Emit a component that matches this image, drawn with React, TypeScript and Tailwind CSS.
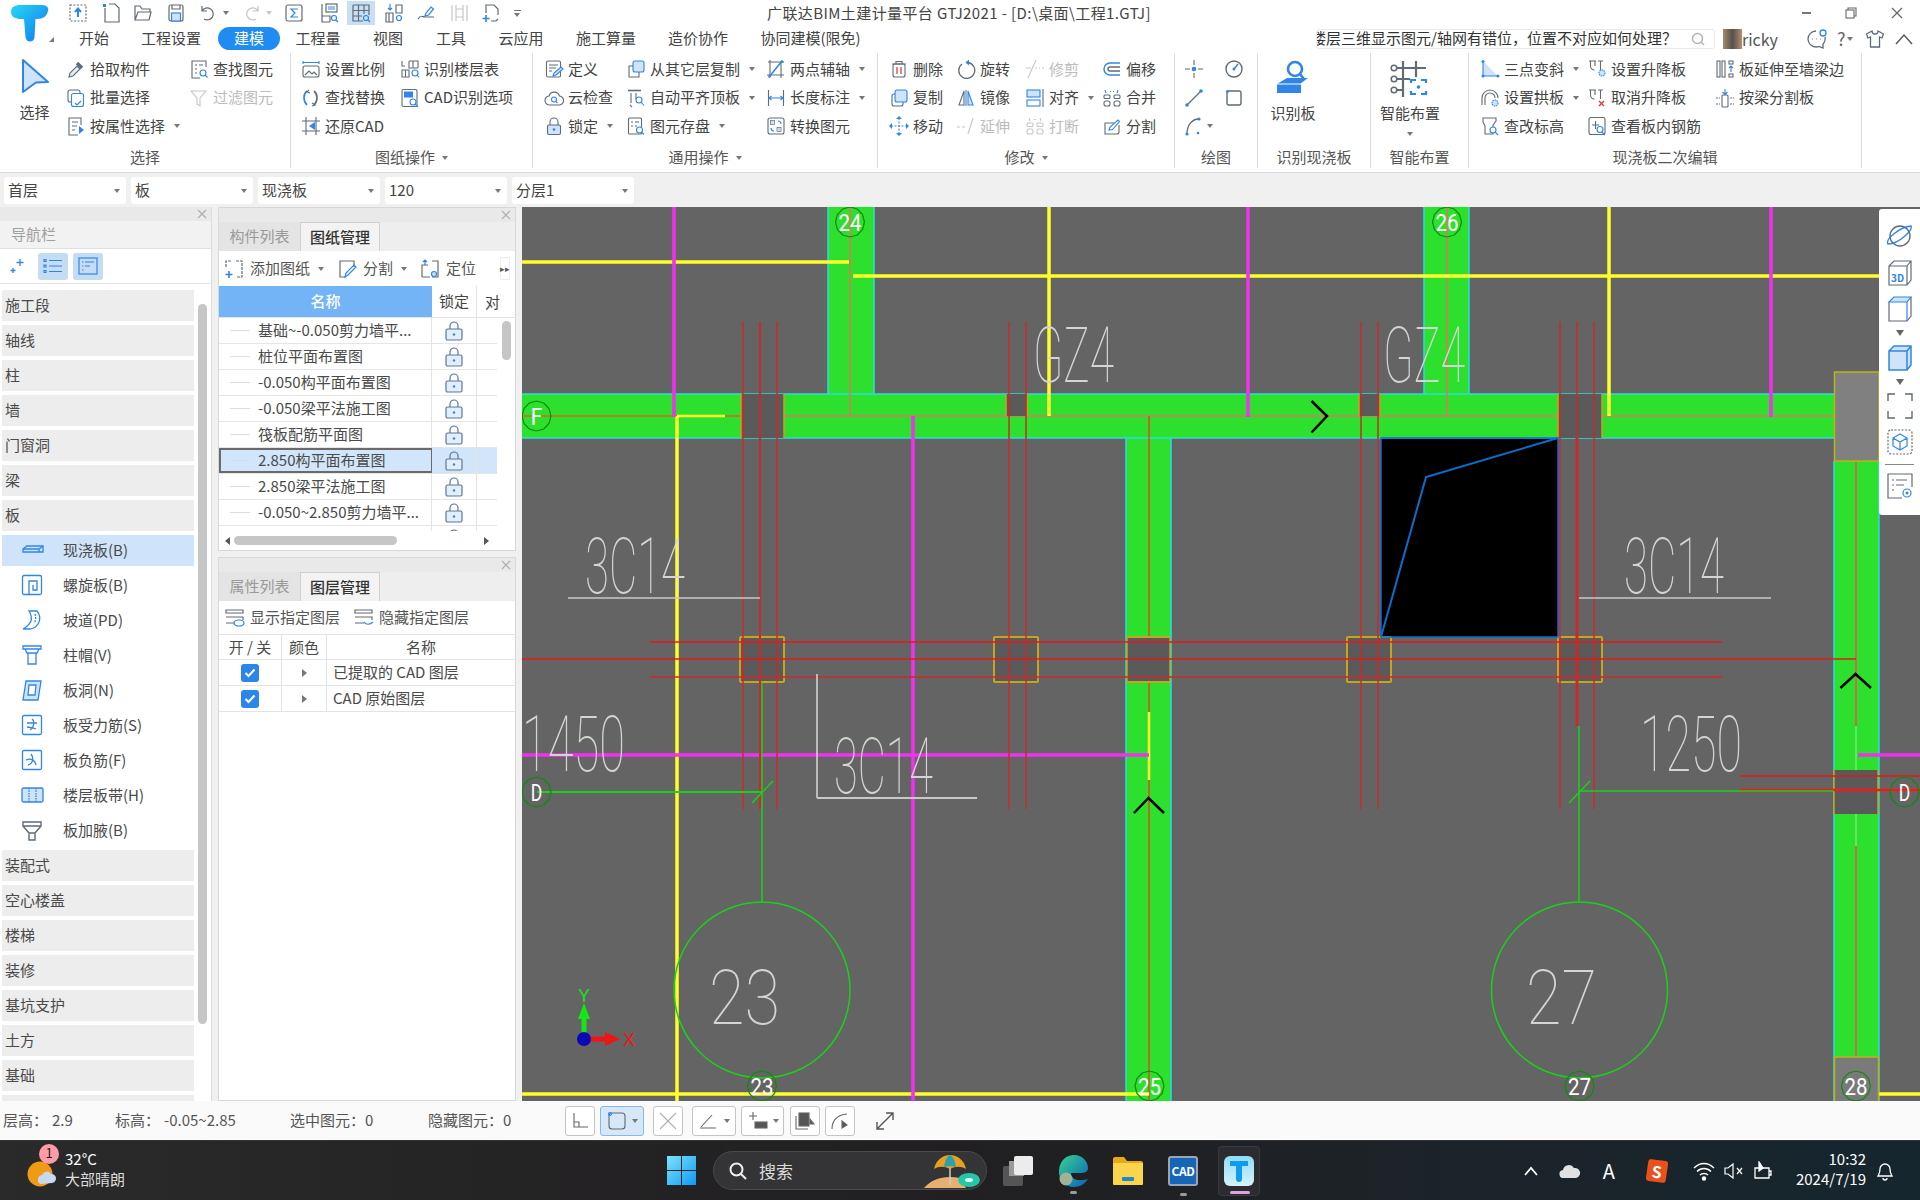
import React from 'react';

const G = '#5f6b76';
const B = '#2f86e8';
const F = '#cfe3fb';
const D = '#c6c6c6';

// ribbon and toolbar glyphs, all on a 20x20 box
const glyphs: Record<string, React.ReactNode> = {
  pick: <><path d="M3 18l1-4 7-7 3 3-7 7z" stroke={G} fill="#e8edf2" /><path d="M11 4l5 5" stroke={G} strokeWidth="3.4" /></>,
  batch: <><rect x="2" y="2" width="12" height="12" rx="2" stroke={G} /><rect x="5.5" y="5.5" width="12" height="13" rx="2" stroke={B} fill="#fff" /><path d="M9 15l2 2 4-4" stroke={B} /></>,
  attr: <><path d="M15 9V2H3v17h9" stroke={G} /><path d="M6 6h6M6 10h5M6 14h3" stroke={G} /><path d="M13 10l5 4-5 4z" fill={B} /></>,
  find: <><path d="M17 8V2H3v17h8" stroke={G} /><path d="M6 6h2M10 6h4M6 10h2M6 14h2" stroke={G} /><circle cx="14" cy="14" r="3" stroke={B} /><path d="M16 16l2.500 2.500" stroke={B} /></>,
  filter: <path d="M2 3h15l-6 7v8l-3-2v-6z" stroke={D} />,
  scale: <><path d="M2 2v3M18 2v3M2 3.500h16" stroke={B} /><rect x="2" y="7" width="16" height="11" rx="2" stroke={G} /><path d="M4 16l4-4 3 3 2-2 3 3" stroke={G} /></>,
  replace: <><path d="M6 3C2 6 2 13 6 17" stroke={B} strokeWidth="1.600" /><path d="M13 3c4 3 4 10 0 14" stroke={G} strokeWidth="1.600" /><path d="M8 2l-2 2 3 1M11 18l3-1-3-2" stroke={G} /></>,
  restore: <><path d="M5 1v18M15 1v18M1 5h18M1 15h18" stroke={G} /><path d="M14 6l-6 4 6 4z" fill={B} /></>,
  floor: <><path d="M2 2v5h3M9 2h9v7M13 2v7M9 2v7h9M2 11v7h7v-7zM5.500 11v7" stroke={G} /><circle cx="15" cy="14" r="3" stroke={B} /><path d="M17 16l2 2.500" stroke={B} /></>,
  cadopt: <><rect x="2" y="1.500" width="15" height="17" rx="1.500" stroke={G} /><rect x="4" y="3.500" width="9" height="6" fill={B} /><circle cx="13" cy="14" r="3" stroke={B} fill="#fff" /><path d="M15 16l3 3" stroke={B} /></>,
  define: <><rect x="2.500" y="2" width="14" height="16" rx="1.500" stroke={G} /><path d="M5 6h9M5 9h7M5 12h3" stroke={G} /><path d="M9 17l1-3 7-6 2 2-7 6z" fill={F} stroke={B} /></>,
  cloud: <><path d="M6 17a4.500 4.500 0 0 1-1-9 5.500 5.500 0 0 1 10.500 0 4.500 4.500 0 0 1-1 9z" stroke={G} /><circle cx="10" cy="11.500" r="2.500" stroke={B} /><path d="M12 13.500l1.500 1.500" stroke={B} /></>,
  lock: <><path d="M6 9V6a4 4 0 0 1 8 0v3" stroke={G} /><rect x="3.500" y="9" width="13" height="9.500" rx="1.500" stroke={G} fill={F} /><circle cx="10" cy="13.500" r="1.300" fill={B} /></>,
  floorcopy: <><rect x="7" y="2" width="11" height="11" rx="2" stroke={B} fill={F} /><path d="M7 7H3v11h10v-5" stroke={G} /></>,
  autotop: <><path d="M2 2.500h13" stroke={G} strokeWidth="1.600" /><path d="M5 5v10M10 5v6" stroke={G} /><circle cx="13" cy="12" r="3" stroke={B} /><path d="M15 14l3 3.500M4 17l2 2" stroke={B} /></>,
  save: <><rect x="2.500" y="2" width="13" height="16" rx="1" stroke={G} /><path d="M5 6h2M9 6h4M5 10h2M9 10h2" stroke={G} /><circle cx="13.500" cy="14" r="3" stroke={B} fill="#fff" /><path d="M15.500 16l2.500 2.500" stroke={B} /></>,
  axis: <><path d="M4 1v17M1 16h17M15 3v16M2 3h16" stroke={G} /><path d="M3 18L16 2" stroke={B} strokeWidth="1.500" /><circle cx="3.500" cy="17.500" r="1.300" fill={B} /><circle cx="16" cy="2.500" r="1.300" fill={B} /></>,
  dim: <><path d="M2.500 2v16M17.500 2v16" stroke={G} /><path d="M3 10h14M5.500 8l-2.500 2 2.500 2M14.500 8l2.500 2-2.500 2" stroke={B} /></>,
  convert: <><rect x="2" y="2" width="16" height="16" rx="2" stroke={G} /><rect x="4.500" y="4.500" width="4" height="4" fill={F} stroke={G} strokeWidth=".7" /><rect x="11" y="11.500" width="4" height="4" fill={F} stroke={G} strokeWidth=".7" /><path d="M12 5a3 3 0 0 1 3 3M8 15a3 3 0 0 1-3-3" stroke={B} /></>,
  del: <><path d="M3 5h14M7 5V2.500h6V5" stroke={G} /><rect x="4" y="5" width="12" height="13" rx="2" stroke={G} /><path d="M8 8v7M12 8v7" stroke="#e03c3c" strokeWidth="1.300" /></>,
  rotate: <><path d="M6 5a8 8 0 1 0 6-1.500" stroke={G} strokeWidth="1.300" /><path d="M13 0.500v6l-3.500-3z" fill={B} /></>,
  trim: <><path d="M3 19L11 1" stroke={D} /><path d="M1 9h5M10 9h2M14 9h1M17 9h2" stroke={D} /></>,
  offset: <><path d="M18 4H8a6 6 0 0 0 0 12h10" stroke={B} strokeWidth="1.400" /><path d="M18 8H8a2 2 0 0 0 0 4h10" stroke={G} strokeWidth="1.400" /></>,
  copy: <><rect x="3" y="6" width="11" height="12" rx="2" stroke={G} /><rect x="6" y="2" width="12" height="12" rx="2" stroke={B} fill={F} /></>,
  mirror: <><path d="M8 3L3 17h5z" stroke={G} /><path d="M10 2v16M12 3l5 14h-5z" fill={F} stroke={B} /></>,
  alignn: <><rect x="2" y="2" width="13" height="7" stroke={B} fill={F} /><rect x="2" y="12" width="13" height="6" stroke={B} /><path d="M18 1v18" stroke={G} /></>,
  merge: <><path d="M3 2l1 3M16 2l-1 3M9 3.500h-1M12 3.500h-1" stroke={B} /><rect x="2" y="7" width="6" height="3.500" rx="1" stroke={G} /><rect x="12" y="7" width="6" height="3.500" rx="1" stroke={G} /><rect x="2" y="13" width="6" height="5" rx="2" stroke={G} /><rect x="12" y="13" width="6" height="5" rx="2" stroke={G} /></>,
  move: <><path d="M10 2v16M2 10h16" stroke={B} strokeDasharray="2 1.500" /><path d="M10 0l3 3H7zM10 20l-3-3h6zM0 10l3-3v6zM20 10l-3 3V7z" fill={B} /></>,
  extend: <><path d="M1 11h3M6 11h3" stroke={D} /><path d="M12 18L17 2" stroke={D} /></>,
  breakk: <><path d="M4 2l1 3M15 2l1 3M9 3.500h2" stroke={D} /><rect x="2" y="7" width="6" height="3.500" rx="1" stroke={D} /><rect x="12" y="7" width="6" height="3.500" rx="1" stroke={D} /><rect x="2" y="13" width="6" height="5" rx="2" stroke={D} /><rect x="12" y="13" width="6" height="5" rx="2" stroke={D} /></>,
  split: <><path d="M17 9v7a2 2 0 0 1-2 2H3V7h9" stroke={G} /><path d="M7 14l1-3 8-7 1.500 1.500-7 8z" stroke={B} /></>,
  point: <><path d="M10 1v5M10 14v5M1 10h5M14 10h5" stroke={G} /><circle cx="10" cy="10" r="2.300" fill={B} /></>,
  arcc: <><circle cx="10" cy="10" r="8" stroke={G} strokeWidth="1.400" /><path d="M10 10l4-5" stroke={B} strokeWidth="1.400" /><circle cx="10" cy="10" r="1.500" fill={B} /></>,
  linee: <><path d="M3 17L17 3" stroke={G} strokeWidth="1.300" /><circle cx="3" cy="17" r="1.800" fill={B} /><circle cx="17" cy="3" r="1.800" fill={B} /></>,
  rectt: <><rect x="3" y="3" width="14" height="14" rx="2" stroke={G} strokeWidth="1.400" /><circle cx="3.500" cy="3.500" r="1.400" fill={B} /></>,
  curve: <><path d="M3 18C3 9 8 3 15 3" stroke={G} strokeWidth="1.300" /><circle cx="3" cy="18" r="1.600" fill={B} /><circle cx="15" cy="3" r="1.600" fill={B} /><circle cx="14" cy="17" r="1.300" fill={B} /></>,
  tilt: <><path d="M3 2v15h15z" fill={F} /><path d="M3 2v15h15" stroke={B} /><circle cx="3" cy="2.500" r="1.500" fill={B} /><circle cx="3" cy="17" r="1.500" fill={B} /><circle cx="18" cy="17" r="1.500" fill={B} /></>,
  raise: <><path d="M2 2h7M3.500 2v5a4 4 0 0 0 4 4M8 2v5M11 2h5M13.500 2v9" stroke={G} /><circle cx="15" cy="14" r="3" fill={F} stroke={B} strokeDasharray="1.500 .7" /></>,
  extendb: <><rect x="2" y="2" width="3" height="16" stroke={G} /><rect x="7" y="2" width="3" height="16" stroke={G} /><rect x="14" y="2" width="4" height="3" stroke={G} /><rect x="14" y="15" width="4" height="3" stroke={G} /><path d="M16 13V7M14 9l2-2 2 2" stroke={B} /></>,
  arch: <><path d="M2 17V10a8 8 0 0 1 16 0" stroke={G} /><path d="M5 17v-7a5 5 0 0 1 10 0" stroke={G} /><circle cx="15" cy="15" r="3" fill={F} stroke={B} strokeDasharray="1.500 .7" /></>,
  unraise: <><path d="M2 2h7M3.500 2v5a4 4 0 0 0 4 4M8 2v5M11 2h5M13.500 2v9" stroke={G} /><path d="M12 13l5 5M17 13l-5 5" stroke="#e03c3c" strokeWidth="1.400" /></>,
  beamsplit: <><path d="M10 1v5M7.500 4l2.500 2.500L12.500 4" stroke={B} /><rect x="7" y="7" width="6" height="12" rx="1" stroke={G} /><path d="M1 10h4M15 10h4M1 16h4M15 16h4" stroke={G} strokeDasharray="2 1" /></>,
  elev: <><path d="M3 2h13v3l-3 4v9H5V10L3 6z" stroke={G} /><circle cx="13" cy="14" r="3" fill="#fff" stroke={B} /><path d="M15 16l3 3" stroke={B} /></>,
  slabbar: <><rect x="2" y="1.500" width="16" height="17" rx="2" stroke={G} /><path d="M5 9h7M8.500 5v8" stroke={G} /><circle cx="13" cy="13.500" r="3" fill="#fff" stroke={B} /><path d="M15 16l3 3" stroke={B} /></>,
};

function Glyph({ name, size = 20 }: { name: string; size?: number }) {
  return (
    <svg width={size} height={size} viewBox="0 0 20 20" fill="none" strokeWidth="1.100" className="shrink-0">
      {glyphs[name]}
    </svg>
  );
}

function Caret({ className = '' }: { className?: string }) {
  return <span className={`inline-block h-0 w-0 shrink-0 border-x-[3.5px] border-t-[4px] border-x-transparent border-t-[#777] ${className}`} />;
}

function Item({ icon, text, caret, off }: { icon: string; text: string; caret?: boolean; off?: boolean }) {
  return (
    <div className={`flex h-[28.5px] items-center gap-[4px] whitespace-nowrap ${off ? 'text-[#bcbcbc]' : 'text-[#444]'}`}>
      <Glyph name={icon} />
      <span>{text}</span>
      {caret && <Caret className="ml-[5px]" />}
    </div>
  );
}

function Col({ w, items }: { w: string; items: React.ComponentProps<typeof Item>[] }) {
  return (
    <div className={`flex shrink-0 flex-col ${w}`}>
      {items.map((it) => (
        <Item key={it.text} {...it} />
      ))}
    </div>
  );
}

function Group({ w, label, caret, pl, children }: { w: string; label: string; caret?: boolean; pl: string; children: React.ReactNode }) {
  return (
    <div className={`relative flex h-[115px] shrink-0 flex-col border-r border-[#dedede] ${w}`}>
      <div className={`flex h-[94px] pt-[2px] ${pl}`}>{children}</div>
      <div className="flex h-[21px] items-center justify-center gap-[7px] whitespace-nowrap text-[#555]">
        <span>{label}</span>
        {caret && <Caret />}
      </div>
    </div>
  );
}

function Ribbon() {
  return (
    <div className="flex h-[122px] border-b border-[#dadada] bg-white pt-[2px]">
      <Group w="w-[291px]" label="选择" pl="pl-0">
        <div className="flex w-[66px] shrink-0 flex-col items-center pl-[3px] pt-[3px] text-[#444]">
          <svg width="30" height="38" viewBox="0 0 30 38" fill="none">
            <path d="M3 2l25 22-12 .5L3 34z" fill={F} stroke={B} strokeWidth="2" strokeLinejoin="round" />
          </svg>
          <span className="mt-[7px]">选择</span>
        </div>
        <Col w="w-[123px]" items={[{ icon: 'pick', text: '拾取构件' }, { icon: 'batch', text: '批量选择' }, { icon: 'attr', text: '按属性选择', caret: true }]} />
        <Col w="w-[90px]" items={[{ icon: 'find', text: '查找图元' }, { icon: 'filter', text: '过滤图元', off: true }]} />
      </Group>
      <Group w="w-[242px]" label="图纸操作" caret pl="pl-[10px]">
        <Col w="w-[99px]" items={[{ icon: 'scale', text: '设置比例' }, { icon: 'replace', text: '查找替换' }, { icon: 'restore', text: '还原CAD' }]} />
        <Col w="w-[120px]" items={[{ icon: 'floor', text: '识别楼层表' }, { icon: 'cadopt', text: 'CAD识别选项' }]} />
      </Group>
      <Group w="w-[345px]" label="通用操作" caret pl="pl-[11px]">
        <Col w="w-[82px]" items={[{ icon: 'define', text: '定义' }, { icon: 'cloud', text: '云检查' }, { icon: 'lock', text: '锁定', caret: true }]} />
        <Col w="w-[140px]" items={[{ icon: 'floorcopy', text: '从其它层复制', caret: true }, { icon: 'autotop', text: '自动平齐顶板', caret: true }, { icon: 'save', text: '图元存盘', caret: true }]} />
        <Col w="w-[100px]" items={[{ icon: 'axis', text: '两点辅轴', caret: true }, { icon: 'dim', text: '长度标注', caret: true }, { icon: 'convert', text: '转换图元' }]} />
      </Group>
      <Group w="w-[297px]" label="修改" caret pl="pl-[11px]">
        <Col w="w-[67px]" items={[{ icon: 'del', text: '删除' }, { icon: 'copy', text: '复制' }, { icon: 'move', text: '移动' }]} />
        <Col w="w-[69px]" items={[{ icon: 'rotate', text: '旋转' }, { icon: 'mirror', text: '镜像' }, { icon: 'extend', text: '延伸', off: true }]} />
        <Col w="w-[77px]" items={[{ icon: 'trim', text: '修剪', off: true }, { icon: 'alignn', text: '对齐', caret: true }, { icon: 'breakk', text: '打断', off: true }]} />
        <Col w="w-[60px]" items={[{ icon: 'offset', text: '偏移' }, { icon: 'merge', text: '合并' }, { icon: 'split', text: '分割' }]} />
      </Group>
      <Group w="w-[83px]" label="绘图" pl="pl-[9px]">
        <div className="grid grid-cols-[40px_24px] grid-rows-[28.5px_28.5px_28.5px] items-center">
          <Glyph name="point" />
          <Glyph name="arcc" />
          <Glyph name="linee" />
          <Glyph name="rectt" />
          <div className="flex items-center gap-[3px]">
            <Glyph name="curve" />
            <Caret />
          </div>
        </div>
      </Group>
      <Group w="w-[113px]" label="识别现浇板" pl="pl-0">
        <div className="flex w-[70px] flex-col items-center pt-[4px] text-[#444]">
          <svg width="36" height="36" viewBox="0 0 36 36" fill="none">
            <circle cx="20" cy="10" r="7" stroke={B} strokeWidth="2.600" />
            <path d="M25 15l4 5" stroke={B} strokeWidth="2.600" />
            <path d="M2 25l10-6h22l-8 6v9H2z" fill={B} />
            <path d="M2 25h24l8-6" stroke="#fff" strokeWidth="1.200" />
          </svg>
          <span className="mt-[9px]">识别板</span>
        </div>
      </Group>
      <Group w="w-[98px]" label="智能布置" pl="pl-0">
        <div className="flex w-[78px] flex-col items-center pt-[4px] text-[#444]">
          <svg width="40" height="40" viewBox="0 0 40 40" fill="none">
            <path d="M13 2v36M26 2v16M4 9h32M4 20h16M4 31h10" stroke={G} strokeWidth="2.200" />
            <circle cx="4" cy="9" r="2.800" stroke={G} strokeWidth="1.500" fill="#fff" />
            <circle cx="4" cy="20" r="2.800" stroke={G} strokeWidth="1.500" fill="#fff" />
            <circle cx="4" cy="31" r="2.800" stroke={G} strokeWidth="1.500" fill="#fff" />
            <path d="M21 24v-3h5M31 21h5v3M36 32v3h-5M26 35h-5v-3" stroke={B} strokeWidth="2.200" />
            <circle cx="28.500" cy="28" r="1.800" fill={B} />
          </svg>
          <span className="mt-[5px]">智能布置</span>
          <Caret className="mt-[9px]" />
        </div>
      </Group>
      <Group w="w-[393px]" label="现浇板二次编辑" pl="pl-[11px]">
        <Col w="w-[107px]" items={[{ icon: 'tilt', text: '三点变斜', caret: true }, { icon: 'arch', text: '设置拱板', caret: true }, { icon: 'elev', text: '查改标高' }]} />
        <Col w="w-[128px]" items={[{ icon: 'raise', text: '设置升降板' }, { icon: 'unraise', text: '取消升降板' }, { icon: 'slabbar', text: '查看板内钢筋' }]} />
        <Col w="w-[135px]" items={[{ icon: 'extendb', text: '板延伸至墙梁边' }, { icon: 'beamsplit', text: '按梁分割板' }]} />
      </Group>
    </div>
  );
}

function Logo() {
  return (
    <svg width="42" height="40" viewBox="0 0 42 40" fill="none">
      <defs>
        <linearGradient id="tlogo" x1="0" y1="0" x2="1" y2="1">
          <stop offset="0" stopColor="#27d6f5" />
          <stop offset="1" stopColor="#0f78ee" />
        </linearGradient>
      </defs>
      <path d="M3 9c0-5 4-7 9-7h22c5 0 7 3 6 6-1 5-5 8-11 8h-1.500l-1 18c-.3 3-2 4.500-4.500 4.500s-4-1.500-4.500-4.500L16 16h-3C8 16 3 14 3 9z" fill="url(#tlogo)" />
    </svg>
  );
}

function QatIcon({ children, active, className = '' }: { children: React.ReactNode; active?: boolean; className?: string }) {
  return (
    <div className={`flex h-[24px] w-[28px] shrink-0 items-center justify-center ${active ? 'bg-[#c8dff6]' : ''} ${className}`}>
      <svg width="20" height="20" viewBox="0 0 20 20" fill="none" stroke={G} strokeWidth="1.200">
        {children}
      </svg>
    </div>
  );
}

const qat: React.ReactNode[] = [
  <><rect x="2" y="2" width="16" height="16" strokeDasharray="2 1.500" /><path d="M10 14V6M7 9l3-3.500L13 9" stroke={B} strokeWidth="2" /></>,
  <><path d="M8 1h6l4 4v14H4V5" /><path d="M2 1h3v3H2z" fill={B} stroke="none" /></>,
  <path d="M2 17V3h5l2 3h8v3M2 17h14l2-8H5z" />,
  <><rect x="3" y="2" width="14" height="16" rx="2" /><rect x="5.500" y="10" width="9" height="8" fill={F} stroke={B} /><path d="M6 2v4h8V2" /></>,
];

function TopBar() {
  return (
    <div className="flex h-[51px]">
      <div className="relative w-[60px] shrink-0 pl-[8px] pt-[3px]">
        <Logo />
        <span className="absolute bottom-[9px] right-[6px] h-0 w-0 border-b-[5px] border-l-[5px] border-b-[#777] border-l-transparent" />
      </div>
      <div className="flex flex-1 flex-col">
        <div className="flex h-[26px] items-center">
          <div className="flex w-[707px] shrink-0 items-center gap-[4.500px] pl-[4px]">
            {qat.map((q, i) => (
              <QatIcon key={i}>{q}</QatIcon>
            ))}
            <QatIcon>
              <path d="M4 8a6 6 0 1 1 2 8M4 3v5h5" />
            </QatIcon>
            <Caret className="-ml-[3.5px]" />
            <QatIcon className="ml-[4.5px]">
              <path d="M16 8a6 6 0 1 0-2 8M16 3v5h-5" stroke={D} />
            </QatIcon>
            <Caret className="-ml-[5px] opacity-40" />
            <QatIcon className="ml-[4px]">
              <rect x="2" y="2" width="16" height="16" rx="2" /><path d="M14 6H7l4 4-4 4h7" stroke={B} />
            </QatIcon>
            <QatIcon className="ml-[2px]">
              <path d="M3 1v18h8M3 13h8v6" /><rect x="7" y="1" width="11" height="8" /><path d="M9 4h7M9 6h7" stroke={B} /><circle cx="15" cy="15" r="2.500" stroke={B} /><path d="M17 17l2 2" stroke={B} />
            </QatIcon>
            <QatIcon active>
              <path d="M2 2h16v10M2 2v16h10M2 7.500h16M2 13h9M7.500 2v16M13 2v9" /><circle cx="15" cy="15" r="2.500" stroke={B} /><path d="M17 17l2 2" stroke={B} />
            </QatIcon>
            <QatIcon>
              <path d="M2 10h7v9H2zM12 2h6v8h-6zM5 10v9" /><path d="M6 1v6M4 5l2 2 2-2" stroke={B} /><circle cx="15" cy="15" r="2.500" stroke={B} />
            </QatIcon>
            <QatIcon>
              <path d="M2 16c3-5 5-2 7-2h9" /><path d="M9 13l1-3 5-6 2.500 2-5 6z" stroke={B} />
            </QatIcon>
            <QatIcon>
              <path d="M3 2v16M7 2v16M14 2v16M18 2v16M7 6h7M7 14h7" stroke={D} />
            </QatIcon>
            <QatIcon>
              <path d="M5 10V2h8l4 4v6M10 18h5l2-2" /><path d="M5 12v7M1.500 15.500h7" stroke={B} strokeWidth="1.600" />
            </QatIcon>
            <span className="ml-[4px] flex flex-col items-center gap-[2px]">
              <span className="h-px w-[7px] bg-[#777]" />
              <Caret />
            </span>
          </div>
          <span className="whitespace-nowrap tracking-[0.4px] text-[#444]">广联达BIM土建计量平台 GTJ2021 - [D:\桌面\工程1.GTJ]</span>
          <div className="ml-auto flex items-center gap-[34px] pr-[17px]">
            <span className="h-[2px] w-[9px] bg-[#777]" />
            <svg width="12" height="12" viewBox="0 0 12 12" fill="none" stroke="#666" strokeWidth="1.100">
              <rect x="1" y="3" width="8" height="8" />
              <path d="M3 3V1h8v8H9" />
            </svg>
            <svg width="12" height="12" viewBox="0 0 12 12" fill="none" stroke="#666" strokeWidth="1.200">
              <path d="M1 1l10 10M11 1L1 11" />
            </svg>
          </div>
        </div>
        <div className="flex h-[25px] items-center text-[#444]">
          <span className="w-[68px] text-center">开始</span>
          <span className="w-[86px] text-center">工程设置</span>
          <span className="ml-[4px] flex h-[23px] w-[62px] items-center justify-center rounded-full bg-[#1e8cf0] text-white">建模</span>
          <span className="w-[76px] text-center">工程量</span>
          <span className="w-[64px] text-center">视图</span>
          <span className="w-[62px] text-center">工具</span>
          <span className="w-[78px] text-center">云应用</span>
          <span className="w-[92px] text-center">施工算量</span>
          <span className="w-[92px] text-center">造价协作</span>
          <span className="w-[133px] whitespace-nowrap text-center">协同建模(限免)</span>
          <div className="ml-[439px] flex h-[20px] w-[399px] shrink-0 items-center overflow-hidden rounded-[3px] border border-[#eaeaea] bg-white">
            <span className="-ml-[6px] flex-1 whitespace-nowrap text-[#333]">楼层三维显示图元/轴网有错位，位置不对应如何处理？</span>
            <svg width="16" height="16" viewBox="0 0 16 16" fill="none" stroke="#b5b5b5" strokeWidth="1.500" className="mr-[8px] shrink-0">
              <circle cx="7.500" cy="7.500" r="5" />
              <path d="M11 11l3 3" />
            </svg>
          </div>
          <div className="ml-[8px] h-[20px] w-[19px] shrink-0 bg-gradient-to-r from-[#a88b6a] via-[#54504f] to-[#b59070]" />
          <span className="text-[16px] text-[#555]">ricky</span>
          <svg width="24" height="24" viewBox="0 0 24 24" fill="none" stroke={G} strokeWidth="1.300" className="ml-[27px] shrink-0">
            <path d="M11 4a8 8 0 1 0 0 16c1 0 2 0 3-.5L18 21v-4a8 8 0 0 0 2-7" />
            <path d="M7 12h.5M11 12h.5M15 12h.5" />
            <circle cx="18" cy="6" r="3" stroke={B} />
          </svg>
          <span className="ml-[8px] text-[18px] text-[#666]">?</span>
          <Caret className="ml-[2px]" />
          <svg width="20" height="20" viewBox="0 0 20 20" fill="none" stroke={G} strokeWidth="1.300" className="ml-[12px] shrink-0">
            <path d="M7 2L1.500 5 3 9l2.500-1v10h9V8L17 9l1.500-4L13 2a3 3 0 0 1-6 0z" />
          </svg>
          <svg width="18" height="12" viewBox="0 0 18 12" fill="none" stroke="#555" strokeWidth="1.400" className="ml-[10px] shrink-0">
            <path d="M1 11l8-9 8 9" />
          </svg>
        </div>
      </div>
    </div>
  );
}

function Combo({ text }: { text: string }) {
  return (
    <div className="flex h-[27px] w-[122px] items-center justify-between rounded-[3px] bg-white pl-[4px] pr-[6px] text-[#444]">
      <span>{text}</span>
      <Caret />
    </div>
  );
}

function CloseHead() {
  return (
    <div className="flex h-[14px] shrink-0 items-center justify-end bg-[#e9e9e9] pr-[4px]">
      <svg width="10" height="10" viewBox="0 0 10 10" stroke="#b0b0b0" strokeWidth="1.200">
        <path d="M1 1l8 8M9 1L1 9" />
      </svg>
    </div>
  );
}

const navTop = ['施工段', '轴线', '柱', '墙', '门窗洞', '梁', '板'];
const navBottom = ['装配式', '空心楼盖', '楼梯', '装修', '基坑支护', '土方', '基础', ''];

const navIcons: Record<string, React.ReactNode> = {
  slab: <><path d="M2 10l4-3h16v6H2z" stroke={B} fill={F} /><path d="M2 10h16l4-3M18 10v3" stroke={B} /></>,
  spiral: <><rect x="1.500" y="1.500" width="19" height="19" rx="1.500" stroke={B} /><path d="M8 20V7h8v9h-4v-5" stroke={B} /></>,
  ramp: <><path d="M2 20c4-2 6-4 8-8 1-4 0-7-2-10h8c3 3 4 9 1 13-2 3-5 5-9 5z" stroke={B} /><path d="M14 5c1 3 1 7-1 9" stroke={B} strokeDasharray="2 1" /></>,
  cap: <path d="M2 2h18v3H2zM4 5l2 4h10l2-4M7 9v11h8V9" stroke={B} />,
  hole: <><path d="M5 2h15l-3 19H2z" stroke={B} fill={F} /><path d="M8 6h7l-1 10H7z" stroke={B} fill="#fff" /></>,
  force: <><rect x="1.500" y="1.500" width="19" height="19" rx="1.500" stroke={B} /><path d="M6 9h10M11 5c3 2 2 9-2 11M6 13c3 0 6 1 9 2" stroke={B} /></>,
  neg: <><rect x="1.500" y="1.500" width="19" height="19" rx="1.500" stroke={B} /><path d="M10 5c3 4 2 10-3 11M5 11c5-2 9 0 10 5" stroke={B} /></>,
  band: <><rect x="1" y="4" width="21" height="14" rx="1.500" stroke={B} fill={F} /><path d="M8 4v14M15 4v14" stroke={B} strokeDasharray="1.500 1" /></>,
  haunch: <path d="M2 3h18v4H2zM2 7l6 7h6l6-7M8 14v7h6v-7" stroke={G} strokeWidth="1.400" />,
};

const navSub = [
  ['slab', '现浇板(B)'],
  ['spiral', '螺旋板(B)'],
  ['ramp', '坡道(PD)'],
  ['cap', '柱帽(V)'],
  ['hole', '板洞(N)'],
  ['force', '板受力筋(S)'],
  ['neg', '板负筋(F)'],
  ['band', '楼层板带(H)'],
  ['haunch', '板加腋(B)'],
];

function NavPanel() {
  return (
    <div className="flex h-full w-[212px] shrink-0 flex-col overflow-hidden border-r border-[#dcdcdc] bg-white">
      <CloseHead />
      <div className="flex h-[28px] shrink-0 items-center border-b border-[#e0e0e0] bg-[#f2f2f2] pl-[11px] text-[#a0a0a0]">导航栏</div>
      <div className="flex h-[35px] shrink-0 items-center border-b border-[#e4e4e4] pl-[10px]">
        <svg width="14" height="16" viewBox="0 0 14 16" fill="none" stroke={B} strokeWidth="1.300">
          <path d="M10 1v7M6.500 4.500h7M3 10v5M.5 12.500h5" />
        </svg>
        <div className="ml-[14px] flex h-[27px] w-[30px] items-center justify-center rounded-[3px] bg-[#c5dcf5]">
          <svg width="20" height="16" viewBox="0 0 20 16" fill="none" stroke={B} strokeWidth="1.200">
            <path d="M6 2.500h13M6 8h13M6 13.500h13M1 1.500h2v2H1zM1 7h2v2H1zM1 12.500h2v2H1z" />
          </svg>
        </div>
        <div className="ml-[5px] flex h-[27px] w-[30px] items-center justify-center rounded-[3px] bg-[#c5dcf5]">
          <svg width="20" height="18" viewBox="0 0 20 18" fill="none" stroke={B} strokeWidth="1.200">
            <rect x="1" y="1" width="18" height="16" />
            <path d="M4 5h1.500M7 5h9M4 9h1.500M7 9h5M4 13h1.500" />
          </svg>
        </div>
      </div>
      <div className="relative flex-1 overflow-hidden pl-[2px] pt-[6px]">
        <div className="flex w-[192px] flex-col gap-[4px] text-[#4a4a4a]">
          {navTop.map((t) => (
            <div key={t} className="flex h-[31px] shrink-0 items-center bg-[#ededed] pl-[3px]">{t}</div>
          ))}
          {navSub.map(([ic, t], i) => (
            <div key={t} className={`flex h-[31px] shrink-0 items-center ${i === 0 ? 'bg-[#cfe4fb]' : ''}`}>
              <svg width="24" height="24" viewBox="0 0 24 24" fill="none" strokeWidth="1.300" className="ml-[19px]">
                {navIcons[ic]}
              </svg>
              <span className="ml-[18px]">{t}</span>
            </div>
          ))}
          {navBottom.map((t) => (
            <div key={t || 'last'} className="flex h-[31px] shrink-0 items-center bg-[#ededed] pl-[3px]">{t}</div>
          ))}
        </div>
        <div className="absolute left-[198px] top-[20px] h-[720px] w-[9px] rounded-full bg-[#c6c6c6]" />
      </div>
    </div>
  );
}

function Tabs({ a, b }: { a: string; b: string }) {
  return (
    <div className="flex h-[29px] shrink-0 bg-[#eeeeee]">
      <div className="flex w-[81px] items-center justify-center bg-[#e4e4e4] text-[#9a9a9a]">{a}</div>
      <div className="flex w-[80px] items-center justify-center border-x border-t border-[#d0d0d0] bg-[#f3f3f3] font-medium text-[#333]">{b}</div>
    </div>
  );
}

const drawings = [
  '基础~-0.050剪力墙平...',
  '桩位平面布置图',
  '-0.050构平面布置图',
  '-0.050梁平法施工图',
  '筏板配筋平面图',
  '2.850构平面布置图',
  '2.850梁平法施工图',
  '-0.050~2.850剪力墙平...',
  '',
];

function RowLock() {
  return (
    <svg width="20" height="22" viewBox="0 0 20 22" fill="none" stroke="#5a7898" strokeWidth="1.200">
      <path d="M6 9V6a4 4 0 0 1 8 0v3" />
      <rect x="2" y="9" width="16" height="11" rx="1.500" fill="#e3eefb" />
      <circle cx="10" cy="14.500" r="1.200" fill={B} stroke="none" />
    </svg>
  );
}

function DrawingPanel() {
  return (
    <div className="flex h-[344px] shrink-0 flex-col overflow-hidden border border-[#d8d8d8] bg-white">
      <CloseHead />
      <Tabs a="构件列表" b="图纸管理" />
      <div className="flex h-[35px] shrink-0 items-center text-[#555]">
        <svg width="20" height="20" viewBox="0 0 20 20" fill="none" stroke={G} strokeWidth="1.200" className="ml-[5px]">
          <path d="M2 8V2h5M12 2h6v16h-6M2 2" strokeDasharray="3 1" />
          <path d="M5 12v7M1.500 15.500h7" stroke={B} strokeWidth="1.600" />
        </svg>
        <span className="ml-[6px]">添加图纸</span>
        <Caret className="ml-[8px]" />
        <svg width="20" height="20" viewBox="0 0 20 20" fill="none" stroke={G} strokeWidth="1.200" className="ml-[13px]">
          <path d="M17 8V2H3v16h6" />
          <path d="M8 18l1-4 8-8 2 2-8 8z" stroke={B} />
        </svg>
        <span className="ml-[6px]">分割</span>
        <Caret className="ml-[8px]" />
        <svg width="20" height="20" viewBox="0 0 20 20" fill="none" stroke={G} strokeWidth="1.200" className="ml-[13px]">
          <path d="M2 18V6h6M12 2h6v16h-6M2 18h8" />
          <path d="M5 1v5M3 3l2-2 2 2" stroke={B} />
          <circle cx="14" cy="15" r="2.500" fill={F} stroke={B} />
        </svg>
        <span className="ml-[6px]">定位</span>
        <span className="ml-auto mr-[5px] flex h-[23px] w-[10px] items-center justify-center border border-[#eee] text-[9px] leading-none text-[#555]">▸▸</span>
      </div>
      <div className="flex h-[31px] shrink-0 text-[#444]">
        <div className="flex w-[213px] items-center justify-center bg-[#72b4f6] font-medium text-white">名称</div>
        <div className="flex w-[45px] items-center justify-center border-r border-[#e4e4e4]">锁定</div>
        <div className="pl-[8px] leading-[31px]">对</div>
      </div>
      <div className="relative flex-1 overflow-hidden border-t border-[#e4e4e4]">
        {drawings.map((d, i) => (
          <div key={d || 'blank'} className={`flex h-[26px] w-[278px] border-b border-[#e6e6e6] text-[#4a4a4a] ${i === 5 ? 'bg-[#d2e6fb]' : ''}`}>
            <div className={`flex w-[213px] items-center whitespace-nowrap border-r border-[#e4e4e4] ${i === 5 ? 'border-2 !border-[#6a6a6a] pl-[9px]' : 'pl-[11px]'}`}>
              <span className="mr-[8px] h-px w-[20px] shrink-0 bg-[#ddd]" />
              <span>{d}</span>
            </div>
            <div className="flex w-[45px] items-center justify-center border-r border-[#e4e4e4]">
              <RowLock />
            </div>
          </div>
        ))}
        <div className="absolute right-[4px] top-[3px] h-[39px] w-[9px] rounded-full bg-[#c6c6c6]" />
      </div>
      <div className="flex h-[19px] shrink-0 items-center bg-white pl-[6px]">
        <span className="h-0 w-0 border-y-[4px] border-r-[5px] border-y-transparent border-r-[#555]" />
        <span className="ml-[4px] h-[9px] w-[163px] rounded-full bg-[#c6c6c6]" />
        <span className="ml-[87px] h-0 w-0 border-y-[4px] border-l-[5px] border-y-transparent border-l-[#555]" />
      </div>
    </div>
  );
}

function Check() {
  return (
    <span className="flex h-[18px] w-[18px] items-center justify-center rounded-[3px] bg-[#2a86ea]">
      <svg width="12" height="10" viewBox="0 0 12 10" fill="none" stroke="#fff" strokeWidth="2">
        <path d="M1.500 5l3 3 6-6.500" />
      </svg>
    </span>
  );
}

function LayerPanel() {
  return (
    <div className="mt-[6px] flex min-h-0 flex-1 flex-col overflow-hidden border border-[#d8d8d8] bg-white">
      <CloseHead />
      <Tabs a="属性列表" b="图层管理" />
      <div className="flex h-[34px] shrink-0 items-center border-b border-[#e4e4e4] pl-[6px] text-[#555]">
        <svg width="20" height="20" viewBox="0 0 20 20" fill="none" stroke={G} strokeWidth="1.200">
          <path d="M1 2h17v3H1zM1 9h17v3M1 15h9" />
          <ellipse cx="14" cy="15" rx="5" ry="3" stroke={B} />
        </svg>
        <span className="ml-[5px]">显示指定图层</span>
        <svg width="20" height="20" viewBox="0 0 20 20" fill="none" stroke={G} strokeWidth="1.200" className="ml-[14px]">
          <path d="M1 2h17v3H1zM1 9h17v3M1 15h9" />
          <path d="M10 14c2 3 6 3 9 0" stroke={B} />
        </svg>
        <span className="ml-[5px]">隐藏指定图层</span>
      </div>
      <div className="grid grid-cols-[63px_45px_1fr] grid-rows-[25px_26px_26px] text-[#4a4a4a]">
        <div className="flex items-center justify-center border-b border-r border-[#e4e4e4]">开 / 关</div>
        <div className="flex items-center justify-center border-b border-r border-[#e4e4e4]">颜色</div>
        <div className="flex items-center justify-center border-b border-[#e4e4e4]">名称</div>
        {['已提取的 CAD 图层', 'CAD 原始图层'].map((n) => (
          <React.Fragment key={n}>
            <div className="flex items-center justify-center border-b border-r border-[#e4e4e4]">
              <Check />
            </div>
            <div className="flex items-center justify-center border-b border-r border-[#e4e4e4]">
              <span className="h-0 w-0 border-y-[4px] border-l-[5px] border-y-transparent border-l-[#777]" />
            </div>
            <div className="flex items-center border-b border-[#e4e4e4] pl-[6px]">{n}</div>
          </React.Fragment>
        ))}
      </div>
    </div>
  );
}

type Seg = [number, number, number, number, string, number];

const GREEN = '#2ee02e';
const CYAN = '#28dede';
const MAG = '#f032f0';
const YEL = '#ffff2a';
const RED = '#c82a2a';
const RED2 = '#e41a1a';
const SAL = '#e87060';
const ORA = '#c9a31c';
const GRN = '#1bd01b';

const beams: [number, number, number, number][] = [
  [828, 207, 46, 187],
  [1424, 207, 45, 187],
  [522, 394, 1312, 44],
  [1126, 438, 45, 663],
  [1834, 461, 45, 640],
];

const columns: [number, number, number, number][] = [
  [741, 394, 43, 44],
  [1006, 394, 21, 22],
  [1359, 394, 21, 22],
  [1558, 394, 44, 44],
  [1127, 637, 43, 45],
  [1834, 770, 44, 44],
];

// under the columns: beam edges, centre lines, yellow and magenta axes
const baseSegs: Seg[] = [
  [828, 207, 828, 394, CYAN, 1.5], [874, 207, 874, 394, CYAN, 1.5],
  [1424, 207, 1424, 394, CYAN, 1.5], [1469, 207, 1469, 394, CYAN, 1.5],
  [522, 394, 1834, 394, CYAN, 1.5], [522, 438, 1834, 438, CYAN, 1.5],
  [1126, 438, 1126, 1101, CYAN, 1.5], [1171, 438, 1171, 1101, CYAN, 1.5],
  [1834, 461, 1834, 1101, CYAN, 1.5], [1879, 461, 1879, 1101, CYAN, 1.5],
  [850, 207, 850, 416, SAL, 1.5], [1447, 207, 1447, 416, SAL, 1.5],
  [522, 416, 741, 416, '#d9661c', 1.5], [784, 416, 1834, 416, SAL, 1.5],
  [1149, 416, 1149, 1101, '#e04a1c', 1.5], [1856, 461, 1856, 1057, '#f05050', 1.5],
  [1856, 726, 1856, 770, '#60e860', 2], [1856, 814, 1856, 846, '#60e860', 2],
  [522, 262, 849, 262, YEL, 3.5], [853, 276, 1879, 276, YEL, 3.5],
  [1049, 207, 1049, 416, YEL, 3.5], [1609, 207, 1609, 416, YEL, 3.5],
  [677, 416, 677, 1101, YEL, 3.5], [677, 416, 725, 416, YEL, 2.5],
  [522, 1094, 1149, 1094, YEL, 3.5], [1879, 1094, 1920, 1094, YEL, 3.5],
  [1149, 712, 1149, 780, YEL, 2.5],
  [674, 207, 674, 417, MAG, 3.5], [913, 416, 913, 1101, MAG, 3.5],
  [1248, 207, 1248, 417, MAG, 3.5], [1771, 207, 1771, 417, MAG, 3.5],
  [522, 755, 1149, 755, MAG, 3.5], [1858, 755, 1920, 755, MAG, 3.5],
];

// over the columns: rebar, leaders, dimension lines
const topSegs: Seg[] = [
  [743, 322, 743, 809, RED, 1.5], [760, 322, 760, 809, RED, 2], [777, 322, 777, 809, RED, 1.5],
  [1009, 322, 1009, 809, RED, 1.5], [1026, 322, 1026, 809, RED, 1.5],
  [1361, 322, 1361, 809, RED, 1.5], [1378, 322, 1378, 809, RED, 1.5],
  [1560, 322, 1560, 809, RED, 1.5], [1577, 438, 1577, 726, RED, 3], [1577, 322, 1577, 438, RED, 1.5], [1594, 322, 1594, 809, RED, 1.5],
  [650, 642, 1722, 642, RED2, 1.5], [650, 677, 1722, 677, RED, 1.5], [522, 659, 1856, 659, RED2, 1.5],
  [1740, 776, 1920, 776, RED2, 1.5], [1740, 790, 1920, 790, '#ff1414', 2.5],
  [537, 792, 761, 792, GRN, 2], [752, 803, 773, 781, GRN, 1.5], [762, 682, 762, 903, GRN, 1.5],
  [1579, 726, 1579, 903, GRN, 1.5], [1579, 791, 1834, 791, GRN, 1.5], [1569, 803, 1590, 781, GRN, 1.5],
  [568, 598, 760, 598, '#c8c8c8', 1.5], [1579, 598, 1771, 598, '#c8c8c8', 1.5],
  [817, 674, 817, 798, '#d8d8d8', 1.5], [817, 798, 977, 798, '#c8c8c8', 2],
];

const cadLabels: [string, number, number, number, number][] = [
  ['GZ4', 1033, 382, 81, 78],
  ['GZ4', 1383, 382, 82, 78],
  ['3C14', 585, 593, 100, 78],
  ['3C14', 1624, 593, 100, 78],
  ['3C14', 834, 793, 99, 78],
  ['1450', 522, 771, 103, 78],
  ['1250', 1640, 771, 102, 78],
  ['23', 709, 1024, 71, 76],
  ['27', 1526, 1024, 71, 76],
];

const bubbles: [string, number, number][] = [
  ['24', 850, 222],
  ['26', 1447, 222],
  ['F', 536.5, 416],
  ['D', 536.5, 792],
  ['D', 1904.5, 792],
  ['23', 762, 1086],
  ['25', 1149.5, 1086],
  ['27', 1579.5, 1086],
  ['28', 1856, 1086],
];

function bubblePoints(cx: number, cy: number) {
  const pts: string[] = [];
  for (let i = 0; i < 12; i++) {
    const a = (i / 12) * Math.PI * 2;
    pts.push(`${cx + 14.5 * Math.cos(a)},${cy + 15 * Math.sin(a)}`);
  }
  return pts.join(' ');
}

function CadDrawing() {
  return (
    <svg width="1398" height="894" viewBox="522 207 1398 894" className="block" fontFamily="Roboto, 'Liberation Sans', sans-serif">
      {beams.map(([x, y, w, h]) => (
        <rect key={`${x}-${y}`} x={x} y={y} width={w} height={h} fill={GREEN} />
      ))}
      <rect x="1381" y="438" width="177" height="199" fill="#000" />
      {baseSegs.map(([a, b, c, d, col, sw], i) => (
        <line key={i} x1={a} y1={b} x2={c} y2={d} stroke={col} strokeWidth={sw} />
      ))}
      {columns.map(([x, y, w, h]) => (
        <g key={`${x}-${y}`}>
          <rect x={x} y={y} width={w} height={h} fill="#5a5a5a" />
          <path d={`M${x} ${y}v${h}M${x + w} ${y}v${h}`} stroke={ORA} strokeWidth="1.500" />
        </g>
      ))}
      {[[740, 637], [994, 637], [1347, 637], [1558, 637]].map(([x, y]) => (
        <rect key={x} x={x} y={y} width="44" height="45" rx="1" fill="#5a5a5a" stroke={ORA} strokeWidth="2" />
      ))}
      <path d="M1127 637h43M1127 682h43" stroke={ORA} strokeWidth="2" />
      <rect x="1834.500" y="372" width="44.500" height="89" fill="#808080" stroke="#b9b414" strokeWidth="1.500" />
      <rect x="1834.500" y="1057" width="44" height="46" fill="#7a7a7a" stroke="#b9b414" strokeWidth="1.500" />
      {topSegs.map(([a, b, c, d, col, sw], i) => (
        <line key={i} x1={a} y1={b} x2={c} y2={d} stroke={col} strokeWidth={sw} />
      ))}
      <path d="M1381 637V438h177v199z" fill="none" stroke="#0a6ed0" strokeWidth="1.500" />
      <path d="M1558 438L1426 477 1381 637" fill="none" stroke="#0a6ed0" strokeWidth="2" />
      <circle cx="762" cy="990" r="88" fill="none" stroke={GRN} strokeWidth="1.500" />
      <circle cx="1579.500" cy="990" r="88" fill="none" stroke={GRN} strokeWidth="1.500" />
      <path d="M1311.500 401l15.500 15-15.500 16.500M1134 813l14.500-15 15.500 15M1840.500 688l15-14 15.500 14" fill="none" stroke="#000" strokeWidth="2.500" />
      {cadLabels.map(([t, x, y, w, fs]) => (
        <text key={`${t}-${x}`} x={x} y={y} fontSize={fs} fontWeight={100} fill="#d4d4d4" textLength={w} lengthAdjust="spacingAndGlyphs">
          {t}
        </text>
      ))}
      {bubbles.map(([t, x, y]) => (
        <g key={`${t}-${x}`}>
          <polygon points={bubblePoints(x, y)} fill="none" stroke="#0f8a0f" strokeWidth="1.200" />
          <text x={x} y={y + 8.500} fontSize="23" fill="#fff" textAnchor="middle" textLength={t.length * 11.500} lengthAdjust="spacingAndGlyphs">
            {t}
          </text>
        </g>
      ))}
      <path d="M584 1039v-24" stroke="#15e615" strokeWidth="5" />
      <path d="M578 1019l6-16 6 16z" fill="#15e615" />
      <path d="M584 1039h24" stroke="#f01414" strokeWidth="5" />
      <path d="M605 1032l15 7-15 7z" fill="#f01414" />
      <circle cx="584" cy="1039" r="7" fill="#0a0ab4" />
      <text x="578" y="1002" fontSize="18" fill="#15e615" fontFamily="'Liberation Sans', sans-serif">Y</text>
      <text x="623" y="1046" fontSize="18" fill="#f01414" fontFamily="'Liberation Sans', sans-serif">X</text>
    </svg>
  );
}

function ViewStrip() {
  const tri = 'block h-0 w-0 shrink-0 border-x-[4px] border-t-[6px] border-x-transparent border-t-[#666]';
  return (
    <div className="absolute right-0 top-[2px] flex h-[306px] w-[41px] flex-col items-center rounded-l-[3px] bg-white pt-[14px]">
      <svg width="28" height="26" viewBox="0 0 28 26" fill="none" strokeWidth="1.400" className="shrink-0">
        <circle cx="14" cy="13" r="10" stroke={G} />
        <path d="M2 21C-1 16 14 4 25 3c2 4-12 18-23 18z" stroke={B} />
      </svg>
      <svg width="26" height="28" viewBox="0 0 26 28" fill="none" stroke={G} strokeWidth="1.200" className="mt-[10px] shrink-0">
        <path d="M2 7l5-5h17v19l-4 5H2zM2 7h18v19M20 7l4-5" />
        <text x="4" y="23" fontSize="10" fontWeight="700" fill={B} stroke="none">3D</text>
      </svg>
      <svg width="26" height="28" viewBox="0 0 26 28" fill="none" stroke={G} strokeWidth="1.200" className="mt-[8px] shrink-0">
        <path d="M2 7v19h18l4-5V2" />
        <path d="M2 7l5-5h17l-4 5zM20 7v19" stroke={B} fill={F} />
      </svg>
      <span className={`mt-[7px] ${tri}`} />
      <svg width="26" height="28" viewBox="0 0 26 28" fill="none" stroke={B} strokeWidth="1.500" className="mt-[8px] shrink-0">
        <path d="M2 7h18v19H2zM2 7l5-5h17v19l-4 5M20 7l4-5" fill={F} />
      </svg>
      <span className={`mt-[7px] ${tri}`} />
      <svg width="26" height="26" viewBox="0 0 26 26" fill="none" stroke={G} strokeWidth="1.400" className="mt-[8px] shrink-0">
        <path d="M1 8V1h7M18 1h7v7M25 18v7h-7M8 25H1v-7" />
      </svg>
      <svg width="26" height="26" viewBox="0 0 26 26" fill="none" strokeWidth="1.200" className="mt-[10px] shrink-0">
        <rect x="1" y="1" width="24" height="24" rx="3" stroke={G} strokeDasharray="2 1.500" />
        <path d="M13 5l7 4v8l-7 4-7-4V9zM6 9l7 4 7-4M13 13v8" stroke={B} />
      </svg>
      <span className="mt-[9px] h-px w-[29px] shrink-0 bg-[#888]" />
      <svg width="26" height="26" viewBox="0 0 26 26" fill="none" stroke={G} strokeWidth="1.200" className="mt-[8px] shrink-0">
        <path d="M25 14V1H1v24h14" />
        <path d="M5 7h2M9 7h11M5 12h2M9 12h8M5 17h2" />
        <circle cx="20" cy="20" r="4" stroke={B} />
        <circle cx="20" cy="20" r="1.500" fill={B} stroke="none" />
      </svg>
    </div>
  );
}

function ToolBtn({ w, active, children, caret }: { w: string; active?: boolean; caret?: boolean; children: React.ReactNode }) {
  return (
    <div className={`flex h-[30px] items-center justify-center gap-[4px] rounded-[3px] border ${w} ${active ? 'border-[#86b8ec] bg-[#d6e7fa]' : 'border-[#c4c4c4] bg-white'}`}>
      <svg width="22" height="22" viewBox="0 0 22 22" fill="none" stroke="#666" strokeWidth="1.100">
        {children}
      </svg>
      {caret && <Caret />}
    </div>
  );
}

function StatusBar() {
  return (
    <div className="flex h-[39px] items-center bg-[#fafafa] text-[#555]">
      <span className="w-[52px] pl-[3px]">层高：</span>
      <span className="w-[63px]">2.9</span>
      <span className="w-[49px]">标高：</span>
      <span className="w-[126px]">-0.05~2.85</span>
      <span className="w-[138px]">选中图元：0</span>
      <span className="w-[137px]">隐藏图元：0</span>
      <div className="flex items-center">
        <ToolBtn w="w-[30px]"><path d="M5 3v14h14M5 12h5v5" /></ToolBtn>
        <ToolBtn w="w-[44px] ml-[5px]" active caret><rect x="3" y="3" width="16" height="16" rx="3" /><circle cx="4" cy="4" r="1.500" stroke={B} /></ToolBtn>
        <ToolBtn w="w-[30px] ml-[9px]"><path d="M3 3l16 16M19 3L3 19" stroke="#b0b0b0" /></ToolBtn>
        <ToolBtn w="w-[44px] ml-[9px]" caret><path d="M2 18h16M3 17L14 5" /></ToolBtn>
        <ToolBtn w="w-[43px] ml-[5px]" caret><path d="M2 6h8M6 2v8" /><rect x="8" y="12" width="12" height="6" fill="#555" /></ToolBtn>
        <ToolBtn w="w-[30px] ml-[6px]"><rect x="5" y="3" width="10" height="13" fill="#555" /><path d="M2 6v13h12" /><path d="M16 9l4 5h-4z" fill="#555" /></ToolBtn>
        <ToolBtn w="w-[30px] ml-[5px]"><path d="M3 19C3 10 9 5 18 4" /><path d="M13 11l5 4-5 3z" fill="#555" /></ToolBtn>
        <svg width="20" height="20" viewBox="0 0 20 20" fill="none" stroke="#555" strokeWidth="1.400" className="ml-[20px]">
          <path d="M2 18L18 2M11 2h7v7M9 18H2v-7" />
        </svg>
      </div>
    </div>
  );
}

function Taskbar() {
  return (
    <div className="flex h-[60px] items-center border-t border-[#333] bg-gradient-to-r from-[#2a2a2a] via-[#211f21] to-[#15262f] text-white">
      <div className="relative ml-[27px] w-[38px] shrink-0">
        <svg width="30" height="30" viewBox="0 0 30 30" className="mt-[6px]">
          <circle cx="13" cy="15" r="12.500" fill="#f09a16" />
          <path d="M13 25a5 5 0 0 1 2-9 5 5 0 0 1 9-1 4.500 4.500 0 0 1 1 9z" fill="#c5d9f0" />
        </svg>
        <span className="absolute -top-[9px] left-[12px] flex h-[20px] w-[20px] items-center justify-center rounded-full bg-[#ff9aa8] text-[13px] text-[#222]">1</span>
      </div>
      <div className="flex w-[602px] shrink-0 flex-col pb-[4px] leading-[20px]">
        <span>32°C</span>
        <span className="text-[#dcdcdc]">大部晴朗</span>
      </div>
      <svg width="29" height="29" viewBox="0 0 29 29" className="shrink-0">
        <defs>
          <linearGradient id="win" x1="0" y1="0" x2="1" y2="1">
            <stop offset="0" stopColor="#7de3fb" />
            <stop offset="1" stopColor="#0c9bf0" />
          </linearGradient>
        </defs>
        <path d="M0 0h14v14H0zM15 0h14v14H15zM0 15h14v14H0zM15 15h14v14H15z" fill="url(#win)" />
      </svg>
      <div className="ml-[17px] flex h-[39px] w-[274px] shrink-0 items-center rounded-full border border-[#4a4a4a] bg-[#343436] pl-[14px] text-[17px] text-[#dcdcdc]">
        <svg width="20" height="20" viewBox="0 0 20 20" fill="none" stroke="#f0f0f0" strokeWidth="2">
          <circle cx="8.500" cy="8.500" r="6" />
          <path d="M13 13l5 5" />
        </svg>
        <span className="ml-[11px]">搜索</span>
        <svg width="56" height="36" viewBox="0 0 56 36" className="ml-auto mr-[6px]">
          <path d="M0 35c8-10 22-13 36-10l6 10z" fill="#e8b070" />
          <path d="M26 8v24" stroke="#ccc" strokeWidth="1.500" />
          <path d="M10 16C12 6 20 2 26 2s14 4 16 14c-5-3-10-3-16 0-6-3-11-3-16 0z" fill="#e8a020" />
          <path d="M20 14C21 6 24 3 26 2c2 1 5 4 6 12-2-1-10-1-12 0z" fill="#2aa0b0" />
          <ellipse cx="45" cy="27" rx="11" ry="7" fill="#22c8a8" />
          <ellipse cx="45" cy="27" rx="4" ry="2" fill="#eafaf5" />
        </svg>
      </div>
      <svg width="30" height="30" viewBox="0 0 30 30" className="ml-[16px] shrink-0">
        <rect x="0" y="10" width="20" height="20" rx="2" fill="#555" />
        <rect x="6" y="5" width="15" height="15" fill="#9a9a9a" />
        <rect x="11" y="0" width="19" height="19" rx="2" fill="#ececec" />
      </svg>
      <div className="relative ml-[25px] shrink-0">
        <svg width="30" height="32" viewBox="0 0 30 32">
          <defs>
            <linearGradient id="edge" x1="0" y1="0" x2="1" y2="1">
              <stop offset="0" stopColor="#35d48c" />
              <stop offset="1" stopColor="#0a60c0" />
            </linearGradient>
          </defs>
          <path d="M1 15C2 5 9 0 16 0c9 0 14 7 14 13 0 5-5 5-11 5h-6c0 6 6 9 17 6-3 5-8 8-14 8C8 32 0 25 1 15z" fill="url(#edge)" />
          <circle cx="8" cy="24" r="6.500" fill="#9fb39a" />
        </svg>
        <span className="absolute -bottom-[7px] left-[12px] h-[3px] w-[7px] rounded-full bg-[#9a9a9a]" />
      </div>
      <svg width="30" height="28" viewBox="0 0 30 28" className="ml-[25px] shrink-0">
        <path d="M0 2a2 2 0 0 1 2-2h9l3 4h14a2 2 0 0 1 2 2v4H0z" fill="#e8a818" />
        <rect x="0" y="6" width="30" height="22" rx="1" fill="#fbd44e" />
        <rect x="9" y="20" width="12" height="4" rx="1" fill="#1e88d8" />
      </svg>
      <div className="relative ml-[25px] shrink-0">
        <div className="flex h-[30px] w-[30px] items-center justify-center rounded-[3px] border-2 border-[#9aa6b2] bg-[#1565b8] text-[12px] font-bold tracking-tight text-white">CAD</div>
        <span className="absolute -bottom-[10px] left-[12px] h-[3px] w-[7px] rounded-full bg-[#9a9a9a]" />
      </div>
      <div className="relative ml-[20px] flex h-[50px] w-[42px] shrink-0 items-center justify-center rounded-[4px] border border-[#3a3a3e] bg-[#2c2c30]">
        <div className="flex h-[30px] w-[30px] items-center justify-center rounded-[6px] bg-gradient-to-b from-[#8fdcf8] to-[#d5f2fc]">
          <svg width="20" height="22" viewBox="0 0 20 22" fill="#0e9cf0">
            <path d="M1 1h18v5h-6v13a3 3 0 0 1-6 0V6H1z" />
          </svg>
        </div>
        <span className="absolute bottom-[1px] left-[11px] h-[3px] w-[20px] rounded-full bg-[#e0a2e4]" />
      </div>
      <div className="ml-auto flex items-center text-white">
        <svg width="16" height="10" viewBox="0 0 16 10" fill="none" stroke="#fff" strokeWidth="1.800">
          <path d="M2 9l6-7 6 7" />
        </svg>
        <svg width="22" height="14" viewBox="0 0 22 14" fill="#e0e0e0" className="ml-[20px]">
          <path d="M5 14a4 4 0 0 1-1-8 6 6 0 0 1 11-2 5 5 0 0 1 2 10z" />
        </svg>
        <span className="ml-[22px] text-[20px] leading-none">A</span>
        <span className="ml-[32px] flex h-[22px] w-[20px] rotate-[8deg] items-center justify-center rounded-[3px] bg-[#e8501c] text-[16px] font-bold leading-none text-white">S</span>
        <svg width="22" height="20" viewBox="0 0 22 20" fill="none" stroke="#fff" strokeWidth="1.400" className="ml-[26px]">
          <path d="M1 7c6-6 14-6 20 0M4 10.500c4-4 10-4 14 0M7 14c2-2 6-2 8 0" />
          <circle cx="11" cy="17.500" r="1.500" fill="#fff" />
        </svg>
        <svg width="20" height="18" viewBox="0 0 20 18" fill="none" stroke="#fff" strokeWidth="1.200" className="ml-[9px]">
          <path d="M1 6v6h3l5 4V2L4 6zM13 6l5 6M18 6l-5 6" />
        </svg>
        <svg width="20" height="20" viewBox="0 0 20 20" fill="none" stroke="#fff" strokeWidth="1.300" className="ml-[9px]">
          <path d="M2 7h14v10H2zM16 10h2v4h-2z" />
          <path d="M6 1v9l4-3z" fill="#fff" />
        </svg>
        <div className="ml-[3px] flex w-[90px] flex-col items-end pb-[4px] leading-[20px]">
          <span>10:32</span>
          <span>2024/7/19</span>
        </div>
        <svg width="18" height="22" viewBox="0 0 18 22" fill="none" stroke="#fff" strokeWidth="1.300" className="ml-[10px] mr-[26px]">
          <path d="M2 16c1-2 2-3 2-7a5 5 0 0 1 10 0c0 4 1 5 2 7zM7 18a2 2 0 0 0 4 0" />
        </svg>
      </div>
    </div>
  );
}

export default function App() {
  return (
    <div className="flex h-[1200px] w-[1920px] flex-col overflow-hidden bg-white text-[15px] leading-tight [font-family:'Noto_Sans_CJK_SC','Liberation_Sans',sans-serif]">
      <TopBar />
      <Ribbon />
      <div className="flex h-[34px] items-start gap-[5px] bg-[#f0f0f0] pl-[4px] pt-[4px]">
        {['首层', '板', '现浇板', '120', '分层1'].map((c) => (
          <Combo key={c} text={c} />
        ))}
      </div>
      <div className="flex h-[894px] bg-[#f0f0f0]">
        <NavPanel />
        <div className="ml-[6px] flex h-full w-[298px] shrink-0 flex-col">
          <DrawingPanel />
          <LayerPanel />
        </div>
        <div className="relative ml-[6px] flex-1 overflow-hidden bg-[#646464]">
          <CadDrawing />
          <ViewStrip />
        </div>
      </div>
      <StatusBar />
      <Taskbar />
    </div>
  );
}
